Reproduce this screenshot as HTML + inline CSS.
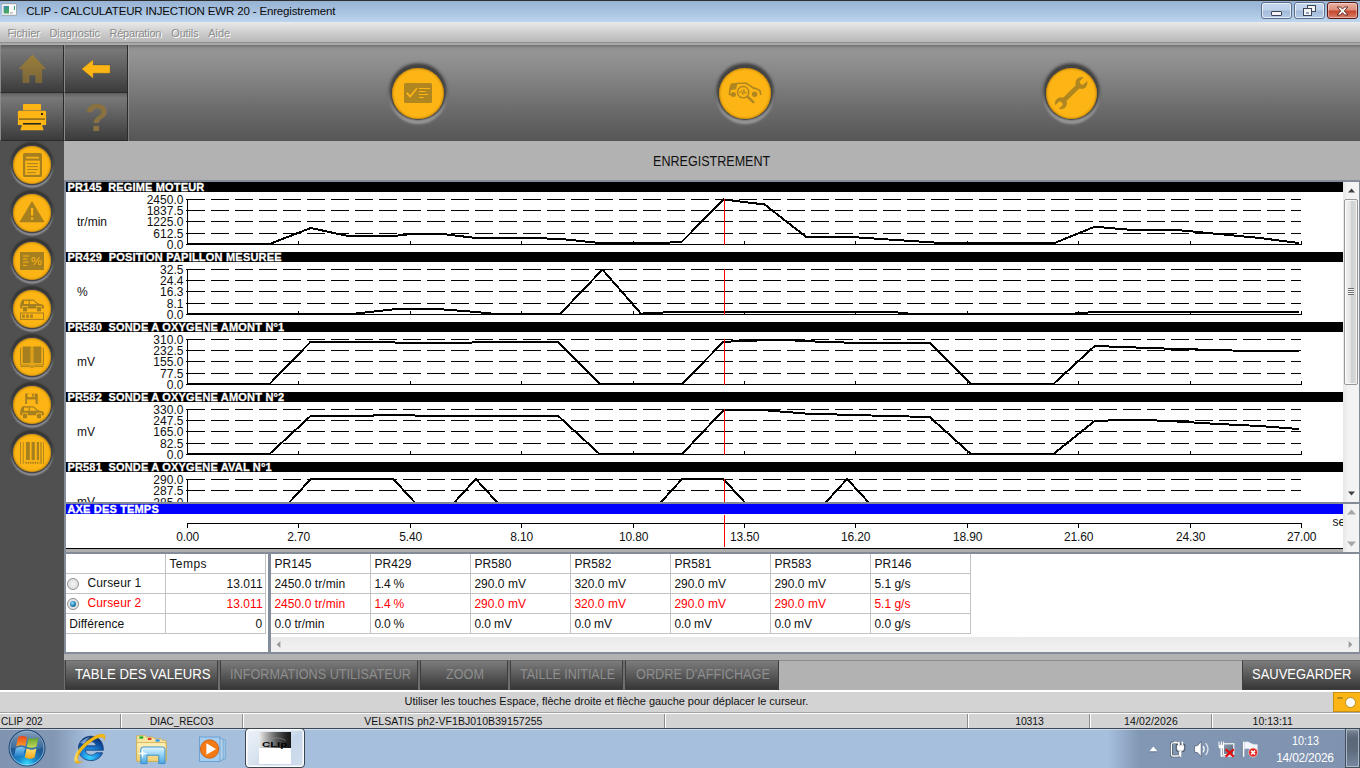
<!DOCTYPE html>
<html lang="fr"><head><meta charset="utf-8"><title>CLIP - CALCULATEUR INJECTION EWR 20 - Enregistrement</title>
<style>

html,body{margin:0;padding:0}
body{width:1360px;height:768px;overflow:hidden;position:relative;background:#b2b2b2;font-family:"Liberation Sans",sans-serif;}
.abs{position:absolute;display:block}
.t{position:absolute;white-space:pre;display:block}
#header{position:absolute;left:64px;top:141px;width:1296px;height:39px;background:#b2b2b2}


#titlebar{position:absolute;left:0;top:0;width:1360px;height:22px;box-sizing:border-box;border-top:1px solid #2e2e2e;background:linear-gradient(#97b3d4 0%,#a6c0de 45%,#bdd5ee 100%);}
.wbtn{position:absolute;top:1px;width:31px;height:17px;box-sizing:border-box;border:1px solid #5c6f8d;border-radius:3px;background:linear-gradient(#c4d6ec 0%,#bdd1e9 48%,#a2bbd9 52%,#b4cbe6 100%);box-shadow:inset 0 0 0 1px rgba(255,255,255,.65);}
.wbtn i{position:absolute;display:block;box-sizing:border-box}
.wclose{border-color:#5a1a14;background:linear-gradient(#e8b0a4 0%,#dc8d7c 48%,#c5432a 52%,#d8806c 100%);box-shadow:inset 0 0 0 1px rgba(255,255,255,.4);}
#menubar{position:absolute;left:0;top:22px;width:1360px;height:20px;background:linear-gradient(#eaeaea 0%,#dcdcdc 25%,#c9c9c9 62%,#b9b9b9 100%);}
#toolbar{position:absolute;left:0;top:45px;width:1360px;height:96px;background:linear-gradient(#6c6c6c 0,#7c7c7c 1px,#888 2px,#929292 4px,#959595 7px,#8a8a8a 24px,#6b6b6b 65px,#565656 96px);}
.sq{position:absolute;width:64px;height:48px;box-sizing:border-box;border-left:1px solid #8a8a8a;border-right:1px solid #2a2a2a;border-bottom:1px solid #2a2a2a;background:linear-gradient(#5c5c5c 0,#6b6b6b 2px,#787878 5px,#5e5e5e 50%,#3b3b3b 100%);overflow:hidden}
.rb{position:absolute;width:51.4px;height:51.4px;border-radius:50%;background:#fdb515;box-shadow:0 -0.5px 1px 1.4px rgba(70,70,70,.9),0 -2.2px 3px 2.6px rgba(45,45,45,.8),0 2.6px 2.4px 2.4px rgba(165,165,165,.85),inset 0 0 2px 1px rgba(150,95,0,.55);}


#sidebar{position:absolute;left:0;top:141px;width:64px;height:549px;background:#505050;}
.sb{position:absolute;left:13px;width:38px;height:38px;border-radius:50%;background:#fdb515;box-shadow:0 0 0.5px 1.2px #474747,0 -1.6px 2px 2.4px rgba(48,48,48,.9),0 1.5px 1.3px 2.2px rgba(146,150,154,.95),inset 0 0 2px 1px rgba(150,95,0,.5);}


#chartpanel{position:absolute;left:66px;top:182px;width:1277px;height:320px;background:#fff;overflow:hidden}
#timepanel{position:absolute;left:66px;top:504px;width:1277px;height:48px;background:#fff;overflow:hidden}
.vsb{position:absolute;width:16px;background:linear-gradient(90deg,#e6e6e6 0%,#f2f2f2 30%,#f4f4f4 100%);}
.thumb{position:absolute;left:1px;width:14px;box-sizing:border-box;border:1px solid #989898;border-radius:2px;background:linear-gradient(90deg,#f4f4f4 0%,#e4e4e6 45%,#cfd0d2 55%,#dcdcdc 100%);box-shadow:inset 0 0 0 1px rgba(255,255,255,.7)}
.thumb i{position:absolute;left:3px;top:50%;margin-top:-4px;width:6px;height:7px;background:repeating-linear-gradient(#6e6e6e 0,#6e6e6e 1px,rgba(255,255,255,.8) 1px,rgba(255,255,255,.8) 2px)}


#frame{position:absolute;left:64px;top:180px;width:1296px;height:474px;background:#858c99;}
#ltable{position:absolute;left:66px;top:554px;width:202px;height:98px;background:#fff;overflow:hidden}
#rtable{position:absolute;left:271px;top:554px;width:1088px;height:98px;background:#fff;overflow:hidden}
.gl{position:absolute;background:#c3c3c3}
.radio{position:absolute;width:12px;height:12px;box-sizing:border-box;border-radius:50%;border:1px solid #8e8f8f;background:radial-gradient(circle at 50% 50%,#f4f4f4 0%,#e3e5e8 45%,#c9ccd1 100%);box-shadow:inset 0 0 0 1px #e8e8e8}
.radio.on i{position:absolute;left:2px;top:2px;width:6px;height:6px;border-radius:50%;background:radial-gradient(circle at 40% 35%,#9fe0f5 0%,#2a8fc4 45%,#0f3f6e 100%)}
.hsb{position:absolute;left:0;top:83px;width:1088px;height:15px;background:linear-gradient(#e9e9e9 0%,#eeeeee 40%,#f1f1f1 100%);}
#btnbar{position:absolute;left:64px;top:660px;width:1296px;height:30px}
#btnbg{position:absolute;left:0;top:0;width:715px;height:30px;background:#6e6e6e}
.btn{position:absolute;top:0;height:30px;box-sizing:border-box;border:1px solid #3e3e3e;border-top-color:#6a6a6a;background:linear-gradient(#7c7c7c 0%,#6b6b6b 25%,#4b4b4b 70%,#363636 100%);}
#status1{position:absolute;left:0;top:690px;width:1360px;height:22px;background:#d3d3d3;border-top:2px solid #fff;box-sizing:border-box}
.cam{position:absolute;left:1333px;top:0px;width:27px;height:20px;box-sizing:border-box;background:#fdb515;border:1px solid #c8900e;border-right:0}
.cam .lens{position:absolute;left:11px;top:4px;width:11px;height:11px;box-sizing:border-box;border-radius:50%;background:#fff;border:1px solid #b58a1c}
.cam .fl{position:absolute;left:3px;top:4px;width:6px;height:2px;background:#b58a1c;border-radius:1px}
#status2{position:absolute;left:0;top:712px;width:1360px;height:16px;background:#d3d3d3;box-sizing:border-box;border-top:1px solid #a2a2a2;box-shadow:inset 0 1px 0 #fff}


#taskbar{position:absolute;left:0;top:728px;width:1360px;height:40px;box-sizing:border-box;border-top:1px solid #3d4754;background:linear-gradient(90deg,#8094b1 0px,#8297b4 54px,#a6bfdd 88px,#a6bfdd 1108px,#8197b4 1140px,#7f93b0 1360px);box-shadow:inset 0 1px 0 rgba(215,230,246,.75)}
.tbtn{position:absolute;left:245px;top:-1px;width:60px;height:40px;box-sizing:border-box;border:1px solid #3c4652;border-radius:4px;background:linear-gradient(135deg,#eef3f9 0%,#d5e1ef 45%,#c6d6ea 60%,#d2deed 100%);box-shadow:inset 0 0 0 1.5px rgba(255,255,255,.95)}
.clipicon{position:absolute;left:13px;top:3px;width:32px;height:32px;background:#fff}
.clipicon .ct{position:absolute;left:0;top:0;width:32px;height:16px;overflow:hidden;background:linear-gradient(90deg,#ececec 0%,#a0a0a0 28%,#5a5a5a 55%,#242424 85%,#161616 100%)}
#showdesk{position:absolute;left:1345px;top:0;width:15px;height:39px;box-sizing:border-box;border:1px solid #44505e;border-top:0;background:linear-gradient(180deg,#8a94a4 0%,#6a7687 12%,#5a6778 24%,#5d6b7c 55%,#7888a0 100%);box-shadow:inset 0 0 0 1px rgba(185,197,212,.8)}

</style></head>
<body>
<div id="titlebar">
<svg class="abs" style="left:0;top:0" width="20" height="20" viewBox="0 1 20 20"><defs><linearGradient id="ai" x1="0" y1="0" x2="0.3" y2="1"><stop offset="0" stop-color="#3f7fc0"/><stop offset="0.35" stop-color="#3f958f"/><stop offset="1" stop-color="#4aa85a"/></linearGradient></defs><rect x="2.2" y="3.4" width="14.4" height="12.2" fill="#9a9a9a"/><rect x="2.2" y="4.2" width="13.8" height="10.6" fill="#fcfcfc"/><rect x="3.6" y="5.9" width="5.4" height="7.6" fill="url(#ai)"/><rect x="10" y="12" width="2.9" height="1.6" fill="#c2c2c2"/><rect x="13.9" y="5.9" width="1.1" height="4.1" fill="url(#ai)"/></svg>
<span class="t" style="left:26.20px;top:4px;font-size:11.5px;line-height:12px;color:#0a0a0a;letter-spacing:-0.157px;">CLIP - CALCULATEUR INJECTION EWR 20 - Enregistrement</span>
<div class="wbtn" style="left:1261px"><i style="left:9px;top:8px;width:9px;height:3px;background:#f4f4f4;border:1px solid #3c4558;border-radius:1px;box-sizing:content-box"></i></div>
<div class="wbtn" style="left:1294px"><i style="left:12px;top:2px;width:7px;height:5px;background:#f4f4f4;border:1px solid #3c4558;box-sizing:content-box"></i><i style="left:8px;top:5px;width:7px;height:6px;background:#f4f4f4;border:1px solid #3c4558;box-sizing:content-box"></i><i style="left:11px;top:9px;width:3px;height:2px;background:#8fa6c4"></i></div>
<div class="wbtn wclose" style="left:1327px"><svg class="abs" style="left:8px;top:3px" width="13" height="10" viewBox="0 0 13 10"><path d="M1.2 1 L4.6 1 L6.5 3.1 L8.4 1 L11.8 1 L8.3 4.9 L12 9 L8.5 9 L6.5 6.7 L4.5 9 L1 9 L4.7 4.9 Z" fill="#f6f6f6" stroke="#5a2018" stroke-width="0.9"/></svg></div>
</div>
<div id="menubar">
<span class="t" style="left:7.50px;top:5px;font-size:11px;line-height:12px;color:#8c8c8c;letter-spacing:-0.100px;text-shadow:1px 1px 0 #fff;">Fichier</span>
<span class="t" style="left:49.40px;top:5px;font-size:11px;line-height:12px;color:#8c8c8c;letter-spacing:-0.076px;text-shadow:1px 1px 0 #fff;">Diagnostic</span>
<span class="t" style="left:109.40px;top:5px;font-size:11px;line-height:12px;color:#8c8c8c;letter-spacing:-0.191px;text-shadow:1px 1px 0 #fff;">Réparation</span>
<span class="t" style="left:171.30px;top:5px;font-size:11px;line-height:12px;color:#8c8c8c;letter-spacing:-0.186px;text-shadow:1px 1px 0 #fff;">Outils</span>
<span class="t" style="left:208.30px;top:5px;font-size:11px;line-height:12px;color:#8c8c8c;letter-spacing:-0.054px;text-shadow:1px 1px 0 #fff;">Aide</span>
</div>
<div class="abs" style="left:0;top:42px;width:1360px;height:1px;background:#8f8f8f"></div>
<div class="abs" style="left:0;top:43px;width:1360px;height:2px;background:linear-gradient(#a4a4a4,#b0b0b0)"></div>
<div id="toolbar">
<div class="abs" style="left:128px;top:0;width:1px;height:96px;background:rgba(190,190,190,.35)"></div>
<div class="sq" style="left:0;top:0"><svg class="abs" style="left:0;top:0" width="62" height="47" viewBox="1 45 62 47"><defs><linearGradient id="hg" x1="0" y1="0" x2="0" y2="1"><stop offset="0" stop-color="#9b7e3a"/><stop offset="1" stop-color="#7b6638"/></linearGradient></defs><path d="M32.4 54.6 L46.2 69 L42.1 69 L42.1 83 L35.4 83 L35.4 75.3 L29.4 75.3 L29.4 83 L22.6 83 L22.6 69 L18.6 69 Z" fill="url(#hg)"/></svg></div>
<div class="sq" style="left:64px;top:0"><svg class="abs" style="left:0;top:0" width="63" height="47" viewBox="65 45 63 47"><path d="M81.6 69 L93.2 59.6 L93.2 64.9 L110.1 64.9 L110.1 73.2 L93.2 73.2 L93.2 78.4 Z" fill="#fdb515" stroke="#3a3a3a" stroke-opacity=".35" stroke-width="0.8"/></svg></div>
<div class="sq" style="left:0;top:48px"><svg class="abs" style="left:0;top:0" width="62" height="48" viewBox="1 93 62 48"><g fill="#fdb515"><rect x="23" y="104" width="18" height="6.2" rx="0.8"/><path d="M19.3 110.8 L44.7 110.8 Q46.1 110.8 46.1 112.2 L46.1 125 L17.9 125 L17.9 112.2 Q17.9 110.8 19.3 110.8 Z"/><path d="M22.6 122.8 L41.4 122.8 L43.6 130.3 L20.4 130.3 Z"/></g><rect x="19" y="118.6" width="26" height="0.9" fill="#3a3320"/><rect x="23" y="123" width="18" height="1.6" fill="#2c2818"/><rect x="41" y="113" width="2" height="2" fill="#2c2818"/></svg></div>
<div class="sq" style="left:64px;top:48px"><span class="t" style="left:19.89px;top:3px;font-size:39px;line-height:43px;color:#8a7240;font-weight:bold;">?</span></div>
<div class="rb" style="left:392.4px;top:22.5px"></div>
<svg class="abs" style="left:392px;top:22px" width="52" height="52" viewBox="392 67 52 52"><rect x="404" y="83" width="28" height="20" rx="1.5" fill="#b08620"/><path d="M406 93.6 L407.8 92.2 L410 95.2 L416.6 87.6 L417.6 88.4 L410.2 98 Z" fill="#fdb515"/><g stroke="#fdb515" stroke-width="1.1"><path d="M419 88.5 H430 M419 91.5 H425.6 M419 94.5 H428 M419 97.5 H423.8"/></g></svg>
<div class="rb" style="left:719.3px;top:22.6px"></div>
<svg class="abs" style="left:719px;top:22px" width="52" height="52" viewBox="719 67 52 52"><g fill="none" stroke="#b08620" stroke-width="1.7" stroke-linecap="round" stroke-linejoin="round"><path d="M731.6 84.4 Q738.4 82.8 746.4 83.4 Q750.6 86 753.8 88.2 Q759.4 89.4 760.4 91.8 L760.6 94.2"/><path d="M731.4 84.6 Q729.8 88 729.8 91.6 L729.4 94.4 L731 94.8"/></g><path d="M731 84.6 Q734.6 83.6 737.4 83.6 L736 89.2 L730 90.2 Q730 87 731 84.6 Z" fill="#b08620"/><circle cx="733.4" cy="94.6" r="2.5" fill="#b08620"/><circle cx="754.6" cy="94.2" r="2.7" fill="#b08620"/><circle cx="743.2" cy="92.2" r="5.7" fill="#fdb515" stroke="#b08620" stroke-width="1.4"/><path d="M738.8 92.4 H740.6 L741.6 90.6 L742.8 94.8 L743.9 89.4 L744.9 93.8 L745.8 92.4 H747.6" fill="none" stroke="#b08620" stroke-width="0.9"/><path d="M747.4 96.6 L753.4 102.2" stroke="#b08620" stroke-width="2.4" stroke-linecap="round"/></svg>
<div class="rb" style="left:1045.6px;top:22.6px"></div>
<svg class="abs" style="left:1045px;top:22px" width="52" height="52" viewBox="1045 67 52 52"><g transform="rotate(-44.5 1071.2 93.1)"><rect x="1059" y="90.7" width="24.4" height="4.8" fill="#b08620"/><circle cx="1085.6" cy="93.1" r="6" fill="#b08620"/><path d="M1085.2 90.6 H1093 V95.6 H1085.2 Q1083.6 93.1 1085.2 90.6 Z" fill="#fdb515"/><circle cx="1056.8" cy="93.1" r="6" fill="#b08620"/><path d="M1057.2 90.6 H1049.4 V95.6 H1057.2 Q1058.8 93.1 1057.2 90.6 Z" fill="#fdb515"/></g></svg>
</div>
<div id="sidebar">
<div class="sb" style="top:5px"></div>
<div class="sb" style="top:53px"></div>
<div class="sb" style="top:101px"></div>
<div class="sb" style="top:149px"></div>
<div class="sb" style="top:197px"></div>
<div class="sb" style="top:245px"></div>
<div class="sb" style="top:293px"></div>
<svg class="abs" style="left:0;top:0" width="64" height="549" viewBox="0 141 64 549"><rect x="23" y="153" width="19" height="24" rx="1.6" fill="#a67f1e"/><rect x="25.2" y="160.6" width="14.6" height="14.2" fill="#fdb515"/><rect x="26" y="156.8" width="13" height="1.7" fill="#fdb515"/><path d="M27 163.6 H38 M27 166.6 H38 M27 169.6 H38 M27 172.6 H36" stroke="#a67f1e" stroke-width="1"/><path d="M32 201.6 L44.2 222 L19.8 222 Z" fill="#a67f1e" stroke="#a67f1e" stroke-width="0.6" stroke-linejoin="round"/><rect x="31" y="208" width="2.2" height="7.6" fill="#fdb515"/><rect x="31" y="217.4" width="2.2" height="2.3" fill="#fdb515"/><rect x="20" y="252" width="24" height="18" fill="#a67f1e"/><path d="M23 256 H29 M23 259 H27.4 M23 262 H28.6 M23 265.4 H26.6" stroke="#fdb515" stroke-width="1"/><text x="36.6" y="265" font-size="11" text-anchor="middle" fill="#fdb515" font-family="Liberation Sans, sans-serif" textLength="11" lengthAdjust="spacingAndGlyphs">%</text><path d="M22.6 299.4 L33.6 299.4 L38.2 303.4 L43.2 304.8 L44.0 306.4 L44.0 308.4 L20.2 308.4 L20.2 304.2 L21.2 301.4 Z" fill="#a67f1e"/><rect x="23.0" y="306.8" width="4" height="4.6" fill="#a67f1e"/><rect x="37.0" y="306.8" width="4" height="4.6" fill="#a67f1e"/><path d="M22.4 306.5 h5.2 M36.4 306.5 h5.2" stroke="#fdb515" stroke-width="0.9"/><path d="M22.6 306.5 v2 M27.4 306.5 v2 M36.6 306.5 v2 M41.4 306.5 v2" stroke="#fdb515" stroke-width="0.8"/><rect x="24.0" y="300.8" width="4.6" height="3.2" fill="#fdb515"/><path d="M29.8 300.8 h3.6 l3.4 3.2 h-7 Z" fill="#fdb515"/><rect x="20.5" y="313" width="23" height="6.4" fill="none" stroke="#a67f1e" stroke-width="1"/><rect x="22.2" y="314.6" width="2.6" height="3.2" fill="#a67f1e"/><rect x="26.2" y="314.6" width="2.6" height="3.2" fill="#a67f1e"/><rect x="30.2" y="314.6" width="2.6" height="3.2" fill="#a67f1e"/><path d="M22.6 346.4 L30.6 346.4 L30.6 363.2 L22.6 363.2 Z M33.4 346.4 L41.4 346.4 L41.4 363.2 L33.4 363.2 Z" fill="#a67f1e"/><path d="M20.6 347.6 V365 H29.6 Q31 365 32 366.4 Q33 365 34.4 365 H43.4 V347.6" fill="none" stroke="#a67f1e" stroke-width="1"/><path d="M20.4 366.6 H29 Q31 366.6 32 368 Q33 366.6 35 366.6 H43.6" fill="none" stroke="#a67f1e" stroke-width="0.9"/><path d="M32 346.4 V364" stroke="#a67f1e" stroke-width="0.8"/><path d="M25.2 393.4 H36.6 L37.8 394.6 V404 H25.2 Z" fill="#a67f1e"/><rect x="27.6" y="393.4" width="7" height="3.8" fill="#fdb515"/><rect x="32" y="393.8" width="1.6" height="2.8" fill="#a67f1e"/><rect x="27" y="399.4" width="8.6" height="4.6" fill="#fdb515"/><path d="M22.6 406.2 L33.6 406.2 L38.2 410.2 L43.2 411.6 L44.0 413.2 L44.0 415.2 L20.2 415.2 L20.2 411.0 L21.2 408.2 Z" fill="#a67f1e"/><rect x="23.0" y="413.6" width="4" height="4.6" fill="#a67f1e"/><rect x="37.0" y="413.6" width="4" height="4.6" fill="#a67f1e"/><path d="M22.4 413.3 h5.2 M36.4 413.3 h5.2" stroke="#fdb515" stroke-width="0.9"/><path d="M22.6 413.3 v2 M27.4 413.3 v2 M36.6 413.3 v2 M41.4 413.3 v2" stroke="#fdb515" stroke-width="0.8"/><rect x="24.0" y="407.6" width="4.6" height="3.2" fill="#fdb515"/><path d="M29.8 407.6 h3.6 l3.4 3.2 h-7 Z" fill="#fdb515"/><rect x="20.2" y="442" width="0.8" height="22.0" fill="#a67f1e"/><rect x="22.8" y="442" width="0.8" height="22.0" fill="#a67f1e"/><rect x="26.0" y="442" width="3.8" height="18.0" fill="#a67f1e"/><rect x="31.6" y="442" width="3.2" height="18.0" fill="#a67f1e"/><rect x="36.8" y="442" width="2.2" height="18.0" fill="#a67f1e"/><rect x="40.4" y="442" width="1.2" height="22.0" fill="#a67f1e"/><rect x="43.0" y="442" width="0.8" height="22.0" fill="#a67f1e"/><path d="M25.4 462.8 H39.6" stroke="#a67f1e" stroke-width="2" stroke-dasharray="1.4 0.9"/></svg>
</div>
<div id="header"><span class="t" style="left:589.40px;top:12px;font-size:14px;line-height:16px;color:#111;transform:scaleX(0.8969);transform-origin:0 0;">ENREGISTREMENT</span></div>
<div id="frame"></div>
<div id="chartpanel">
<svg class="abs" style="left:0;top:0" width="1277" height="320" viewBox="66 182 1277 320" shape-rendering="crispEdges"><rect x="66" y="182" width="1277" height="10" fill="#000"/><path d="M187 199.5 H1301" stroke="#000" stroke-width="1" stroke-dasharray="18 6"/><rect x="186" y="199" width="1" height="1" fill="#000"/><path d="M187 210.5 H1301" stroke="#000" stroke-width="1" stroke-dasharray="18 6"/><rect x="186" y="210" width="1" height="1" fill="#000"/><path d="M187 221.5 H1301" stroke="#000" stroke-width="1" stroke-dasharray="18 6"/><rect x="186" y="221" width="1" height="1" fill="#000"/><path d="M187 233.5 H1301" stroke="#000" stroke-width="1" stroke-dasharray="18 6"/><rect x="186" y="233" width="1" height="1" fill="#000"/><rect x="187" y="199" width="1" height="46" fill="#000"/><rect x="186" y="244" width="1116" height="1" fill="#000"/><rect x="298" y="241" width="1" height="4" fill="#000"/><rect x="410" y="241" width="1" height="4" fill="#000"/><rect x="521" y="241" width="1" height="4" fill="#000"/><rect x="633" y="241" width="1" height="4" fill="#000"/><rect x="744" y="241" width="1" height="4" fill="#000"/><rect x="855" y="241" width="1" height="4" fill="#000"/><rect x="967" y="241" width="1" height="4" fill="#000"/><rect x="1078" y="241" width="1" height="4" fill="#000"/><rect x="1190" y="241" width="1" height="4" fill="#000"/><rect x="1301" y="241" width="1" height="4" fill="#000"/><polyline points="187.0,244.0 269.5,244.0 310.8,228.0 347.9,236.0 393.3,236.0 411.9,234.0 442.8,234.0 475.8,238.0 517.1,238.0 558.3,238.7 599.6,243.0 657.4,243.5 682.1,241.5 723.4,199.5 764.6,204.5 805.9,236.7 847.1,236.7 888.4,239.5 929.7,242.2 946.2,243.4 1053.4,243.5 1094.7,226.7 1127.7,229.6 1177.2,230.0 1218.5,234.0 1259.7,238.0 1298.9,243.0" fill="none" stroke="#000" stroke-width="2" stroke-linejoin="round"/><rect x="724" y="199" width="1" height="46" fill="#f00"/><rect x="66" y="252" width="1277" height="10" fill="#000"/><path d="M187 269.5 H1301" stroke="#000" stroke-width="1" stroke-dasharray="18 6"/><rect x="186" y="269" width="1" height="1" fill="#000"/><path d="M187 280.5 H1301" stroke="#000" stroke-width="1" stroke-dasharray="18 6"/><rect x="186" y="280" width="1" height="1" fill="#000"/><path d="M187 291.5 H1301" stroke="#000" stroke-width="1" stroke-dasharray="18 6"/><rect x="186" y="291" width="1" height="1" fill="#000"/><path d="M187 303.5 H1301" stroke="#000" stroke-width="1" stroke-dasharray="18 6"/><rect x="186" y="303" width="1" height="1" fill="#000"/><rect x="187" y="269" width="1" height="46" fill="#000"/><rect x="186" y="314" width="1116" height="1" fill="#000"/><rect x="298" y="311" width="1" height="4" fill="#000"/><rect x="410" y="311" width="1" height="4" fill="#000"/><rect x="521" y="311" width="1" height="4" fill="#000"/><rect x="633" y="311" width="1" height="4" fill="#000"/><rect x="744" y="311" width="1" height="4" fill="#000"/><rect x="855" y="311" width="1" height="4" fill="#000"/><rect x="967" y="311" width="1" height="4" fill="#000"/><rect x="1078" y="311" width="1" height="4" fill="#000"/><rect x="1190" y="311" width="1" height="4" fill="#000"/><rect x="1301" y="311" width="1" height="4" fill="#000"/><polyline points="187.0,314.0 352.0,314.0 393.3,309.4 442.8,309.4 475.8,312.0 496.4,314.0 560.0,314.0 602.5,269.6 640.9,313.6 682.1,311.6 888.4,311.6 909.0,313.6 1074.1,313.6 1094.7,312.0 1298.9,312.0" fill="none" stroke="#000" stroke-width="2" stroke-linejoin="round"/><rect x="724" y="269" width="1" height="46" fill="#f00"/><rect x="66" y="322" width="1277" height="10" fill="#000"/><path d="M187 339.5 H1301" stroke="#000" stroke-width="1" stroke-dasharray="18 6"/><rect x="186" y="339" width="1" height="1" fill="#000"/><path d="M187 350.5 H1301" stroke="#000" stroke-width="1" stroke-dasharray="18 6"/><rect x="186" y="350" width="1" height="1" fill="#000"/><path d="M187 361.5 H1301" stroke="#000" stroke-width="1" stroke-dasharray="18 6"/><rect x="186" y="361" width="1" height="1" fill="#000"/><path d="M187 373.5 H1301" stroke="#000" stroke-width="1" stroke-dasharray="18 6"/><rect x="186" y="373" width="1" height="1" fill="#000"/><rect x="187" y="339" width="1" height="46" fill="#000"/><rect x="186" y="384" width="1116" height="1" fill="#000"/><rect x="298" y="381" width="1" height="4" fill="#000"/><rect x="410" y="381" width="1" height="4" fill="#000"/><rect x="521" y="381" width="1" height="4" fill="#000"/><rect x="633" y="381" width="1" height="4" fill="#000"/><rect x="744" y="381" width="1" height="4" fill="#000"/><rect x="855" y="381" width="1" height="4" fill="#000"/><rect x="967" y="381" width="1" height="4" fill="#000"/><rect x="1078" y="381" width="1" height="4" fill="#000"/><rect x="1190" y="381" width="1" height="4" fill="#000"/><rect x="1301" y="381" width="1" height="4" fill="#000"/><polyline points="187.0,384.0 269.5,384.0 310.8,341.6 393.3,341.6 395.4,342.6 558.3,342.4 599.6,384.0 682.1,384.0 723.4,341.8 764.6,340.2 793.5,340.4 805.9,341.2 847.1,342.6 929.7,342.6 970.9,384.0 1053.4,384.0 1094.7,346.0 1136.0,347.5 1177.2,349.0 1218.5,350.0 1259.7,351.5 1298.9,351.3" fill="none" stroke="#000" stroke-width="2" stroke-linejoin="round"/><rect x="724" y="339" width="1" height="46" fill="#f00"/><rect x="66" y="392" width="1277" height="10" fill="#000"/><path d="M187 409.5 H1301" stroke="#000" stroke-width="1" stroke-dasharray="18 6"/><rect x="186" y="409" width="1" height="1" fill="#000"/><path d="M187 420.5 H1301" stroke="#000" stroke-width="1" stroke-dasharray="18 6"/><rect x="186" y="420" width="1" height="1" fill="#000"/><path d="M187 431.5 H1301" stroke="#000" stroke-width="1" stroke-dasharray="18 6"/><rect x="186" y="431" width="1" height="1" fill="#000"/><path d="M187 443.5 H1301" stroke="#000" stroke-width="1" stroke-dasharray="18 6"/><rect x="186" y="443" width="1" height="1" fill="#000"/><rect x="187" y="409" width="1" height="46" fill="#000"/><rect x="186" y="454" width="1116" height="1" fill="#000"/><rect x="298" y="451" width="1" height="4" fill="#000"/><rect x="410" y="451" width="1" height="4" fill="#000"/><rect x="521" y="451" width="1" height="4" fill="#000"/><rect x="633" y="451" width="1" height="4" fill="#000"/><rect x="744" y="451" width="1" height="4" fill="#000"/><rect x="855" y="451" width="1" height="4" fill="#000"/><rect x="967" y="451" width="1" height="4" fill="#000"/><rect x="1078" y="451" width="1" height="4" fill="#000"/><rect x="1190" y="451" width="1" height="4" fill="#000"/><rect x="1301" y="451" width="1" height="4" fill="#000"/><polyline points="187.0,454.0 269.5,454.0 310.8,415.8 372.7,415.8 374.7,415.0 413.9,415.0 416.0,416.0 558.3,416.0 599.6,454.0 682.1,454.0 723.4,410.2 764.6,410.2 805.9,413.6 847.1,414.8 888.4,416.0 929.7,417.0 970.9,454.0 1053.4,454.0 1094.7,421.0 1136.0,419.5 1177.2,421.5 1218.5,424.0 1259.7,426.0 1298.9,429.0" fill="none" stroke="#000" stroke-width="2" stroke-linejoin="round"/><rect x="724" y="409" width="1" height="46" fill="#f00"/><rect x="66" y="462" width="1277" height="10" fill="#000"/><path d="M187 479.5 H1301" stroke="#000" stroke-width="1" stroke-dasharray="18 6"/><rect x="186" y="479" width="1" height="1" fill="#000"/><path d="M187 490.5 H1301" stroke="#000" stroke-width="1" stroke-dasharray="18 6"/><rect x="186" y="490" width="1" height="1" fill="#000"/><path d="M187 502.5 H1301" stroke="#000" stroke-width="1" stroke-dasharray="18 6"/><rect x="186" y="502" width="1" height="1" fill="#000"/><path d="M187 513.5 H1301" stroke="#000" stroke-width="1" stroke-dasharray="18 6"/><rect x="186" y="513" width="1" height="1" fill="#000"/><rect x="187" y="479" width="1" height="46" fill="#000"/><rect x="186" y="524" width="1116" height="1" fill="#000"/><rect x="298" y="521" width="1" height="4" fill="#000"/><rect x="410" y="521" width="1" height="4" fill="#000"/><rect x="521" y="521" width="1" height="4" fill="#000"/><rect x="633" y="521" width="1" height="4" fill="#000"/><rect x="744" y="521" width="1" height="4" fill="#000"/><rect x="855" y="521" width="1" height="4" fill="#000"/><rect x="967" y="521" width="1" height="4" fill="#000"/><rect x="1078" y="521" width="1" height="4" fill="#000"/><rect x="1190" y="521" width="1" height="4" fill="#000"/><rect x="1301" y="521" width="1" height="4" fill="#000"/><polyline points="187.0,524.0 269.5,524.0 310.8,479.0 393.3,479.0 434.6,524.0 475.8,479.0 517.1,524.0 640.9,524.0 682.1,479.0 723.4,479.0 764.6,524.0 805.9,524.0 847.1,479.0 888.4,524.0 1298.9,524.0" fill="none" stroke="#000" stroke-width="2" stroke-linejoin="round"/><rect x="724" y="479" width="1" height="46" fill="#f00"/></svg>
<span class="t" style="left:1.40px;top:-1px;font-size:11px;line-height:12px;color:#fff;letter-spacing:0.157px;font-weight:bold;white-space:pre;-webkit-text-stroke:0.3px #fff;">PR145  REGIME MOTEUR</span>
<span class="t" style="left:80.70px;top:11px;font-size:12px;line-height:14px;color:#111;">2450.0</span>
<span class="t" style="left:80.70px;top:22px;font-size:12px;line-height:14px;color:#111;">1837.5</span>
<span class="t" style="left:80.70px;top:33px;font-size:12px;line-height:14px;color:#111;">1225.0</span>
<span class="t" style="left:87.37px;top:45px;font-size:12px;line-height:14px;color:#111;">612.5</span>
<span class="t" style="left:100.72px;top:56px;font-size:12px;line-height:14px;color:#111;">0.0</span>
<span class="t" style="left:11.00px;top:33px;font-size:12px;line-height:14px;color:#111;">tr/min</span>
<span class="t" style="left:1.40px;top:69px;font-size:11px;line-height:12px;color:#fff;letter-spacing:0.215px;font-weight:bold;white-space:pre;-webkit-text-stroke:0.3px #fff;">PR429  POSITION PAPILLON MESUREE</span>
<span class="t" style="left:94.05px;top:81px;font-size:12px;line-height:14px;color:#111;">32.5</span>
<span class="t" style="left:94.05px;top:92px;font-size:12px;line-height:14px;color:#111;">24.4</span>
<span class="t" style="left:94.05px;top:103px;font-size:12px;line-height:14px;color:#111;">16.3</span>
<span class="t" style="left:100.72px;top:115px;font-size:12px;line-height:14px;color:#111;">8.1</span>
<span class="t" style="left:100.72px;top:126px;font-size:12px;line-height:14px;color:#111;">0.0</span>
<span class="t" style="left:11.00px;top:103px;font-size:12px;line-height:14px;color:#111;">%</span>
<span class="t" style="left:1.40px;top:139px;font-size:11px;line-height:12px;color:#fff;letter-spacing:0.188px;font-weight:bold;white-space:pre;-webkit-text-stroke:0.3px #fff;">PR580  SONDE A OXYGENE AMONT N°1</span>
<span class="t" style="left:87.37px;top:151px;font-size:12px;line-height:14px;color:#111;">310.0</span>
<span class="t" style="left:87.37px;top:162px;font-size:12px;line-height:14px;color:#111;">232.5</span>
<span class="t" style="left:87.37px;top:173px;font-size:12px;line-height:14px;color:#111;">155.0</span>
<span class="t" style="left:94.05px;top:185px;font-size:12px;line-height:14px;color:#111;">77.5</span>
<span class="t" style="left:100.72px;top:196px;font-size:12px;line-height:14px;color:#111;">0.0</span>
<span class="t" style="left:11.00px;top:173px;font-size:12px;line-height:14px;color:#111;">mV</span>
<span class="t" style="left:1.40px;top:209px;font-size:11px;line-height:12px;color:#fff;letter-spacing:0.188px;font-weight:bold;white-space:pre;-webkit-text-stroke:0.3px #fff;">PR582  SONDE A OXYGENE AMONT N°2</span>
<span class="t" style="left:87.37px;top:221px;font-size:12px;line-height:14px;color:#111;">330.0</span>
<span class="t" style="left:87.37px;top:232px;font-size:12px;line-height:14px;color:#111;">247.5</span>
<span class="t" style="left:87.37px;top:243px;font-size:12px;line-height:14px;color:#111;">165.0</span>
<span class="t" style="left:94.05px;top:255px;font-size:12px;line-height:14px;color:#111;">82.5</span>
<span class="t" style="left:100.72px;top:266px;font-size:12px;line-height:14px;color:#111;">0.0</span>
<span class="t" style="left:11.00px;top:243px;font-size:12px;line-height:14px;color:#111;">mV</span>
<span class="t" style="left:1.40px;top:279px;font-size:11px;line-height:12px;color:#fff;letter-spacing:0.184px;font-weight:bold;white-space:pre;-webkit-text-stroke:0.3px #fff;">PR581  SONDE A OXYGENE AVAL N°1</span>
<span class="t" style="left:87.37px;top:291px;font-size:12px;line-height:14px;color:#111;">290.0</span>
<span class="t" style="left:87.37px;top:302px;font-size:12px;line-height:14px;color:#111;">287.5</span>
<span class="t" style="left:87.37px;top:314px;font-size:12px;line-height:14px;color:#111;">285.0</span>
<span class="t" style="left:87.37px;top:325px;font-size:12px;line-height:14px;color:#111;">282.5</span>
<span class="t" style="left:87.37px;top:336px;font-size:12px;line-height:14px;color:#111;">280.0</span>
<span class="t" style="left:11.00px;top:313px;font-size:12px;line-height:14px;color:#111;">mV</span>
</div>
<div class="vsb" style="left:1343px;top:182px;height:320px"><svg class="abs" style="left:5px;top:5.6px" width="7" height="5" viewBox="0 0 7 5"><path d="M0 4.4 L3.5 0.4 L7 4.4 Z" fill="#404040"/></svg><div class="thumb" style="top:17px;height:186px"><i></i></div><svg class="abs" style="left:5px;top:309.4px" width="7" height="5" viewBox="0 0 7 5"><path d="M0 0.6 L3.5 4.6 L7 0.6 Z" fill="#404040"/></svg></div>
<div id="timepanel">
<svg class="abs" style="left:0;top:0" width="1277" height="48" viewBox="66 504 1277 48" shape-rendering="crispEdges"><rect x="66" y="504" width="1277" height="10" fill="#0000fe"/><rect x="187" y="523" width="1115" height="1" fill="#000"/><rect x="187" y="523" width="1" height="5" fill="#000"/><rect x="298" y="523" width="1" height="5" fill="#000"/><rect x="410" y="523" width="1" height="5" fill="#000"/><rect x="521" y="523" width="1" height="5" fill="#000"/><rect x="633" y="523" width="1" height="5" fill="#000"/><rect x="744" y="523" width="1" height="5" fill="#000"/><rect x="855" y="523" width="1" height="5" fill="#000"/><rect x="967" y="523" width="1" height="5" fill="#000"/><rect x="1078" y="523" width="1" height="5" fill="#000"/><rect x="1190" y="523" width="1" height="5" fill="#000"/><rect x="1301" y="523" width="1" height="5" fill="#000"/><rect x="724" y="515" width="1" height="32" fill="#f00"/><rect x="66" y="548" width="1277" height="1.4" fill="#000"/><rect x="66" y="549.4" width="1277" height="2.6" fill="#aeaeae"/></svg>
<span class="t" style="left:1.40px;top:-1px;font-size:11px;line-height:12px;color:#fff;letter-spacing:0.174px;font-weight:bold;-webkit-text-stroke:0.3px #fff;">AXE DES TEMPS</span>
<span class="t" style="left:110.30px;top:26px;font-size:12px;line-height:14px;color:#111;letter-spacing:-0.188px;">0.00</span>
<span class="t" style="left:221.30px;top:26px;font-size:12px;line-height:14px;color:#111;letter-spacing:-0.188px;">2.70</span>
<span class="t" style="left:333.30px;top:26px;font-size:12px;line-height:14px;color:#111;letter-spacing:-0.188px;">5.40</span>
<span class="t" style="left:444.30px;top:26px;font-size:12px;line-height:14px;color:#111;letter-spacing:-0.188px;">8.10</span>
<span class="t" style="left:553.00px;top:26px;font-size:12px;line-height:14px;color:#111;letter-spacing:-0.165px;">10.80</span>
<span class="t" style="left:664.00px;top:26px;font-size:12px;line-height:14px;color:#111;letter-spacing:-0.165px;">13.50</span>
<span class="t" style="left:775.00px;top:26px;font-size:12px;line-height:14px;color:#111;letter-spacing:-0.165px;">16.20</span>
<span class="t" style="left:887.00px;top:26px;font-size:12px;line-height:14px;color:#111;letter-spacing:-0.165px;">18.90</span>
<span class="t" style="left:998.00px;top:26px;font-size:12px;line-height:14px;color:#111;letter-spacing:-0.165px;">21.60</span>
<span class="t" style="left:1110.00px;top:26px;font-size:12px;line-height:14px;color:#111;letter-spacing:-0.165px;">24.30</span>
<span class="t" style="left:1221.00px;top:26px;font-size:12px;line-height:14px;color:#111;letter-spacing:-0.165px;">27.00</span>
<span class="t" style="left:1266.60px;top:11px;font-size:12px;line-height:14px;color:#111;">sec</span>
</div>
<div class="vsb" style="left:1343px;top:504px;height:48px"><svg class="abs" style="left:4px;top:5px" width="9" height="6" viewBox="0 0 9 6"><path d="M0 5.5 L4.5 0.5 L9 5.5 Z" fill="#a8a8a8"/></svg><svg class="abs" style="left:4px;top:37px" width="9" height="6" viewBox="0 0 9 6"><path d="M0 0.5 L4.5 5.5 L9 0.5 Z" fill="#a8a8a8"/></svg></div>
<div id="ltable">
<div class="gl" style="left:0;top:19px;width:200px;height:1px"></div>
<div class="gl" style="left:0;top:39px;width:200px;height:1px"></div>
<div class="gl" style="left:0;top:59px;width:200px;height:1px"></div>
<div class="gl" style="left:0;top:79px;width:200px;height:1px"></div>
<div class="gl" style="left:99px;top:0;width:1px;height:80px"></div>
<div class="gl" style="left:199px;top:0;width:1px;height:80px"></div>
<span class="t" style="left:103.40px;top:3px;font-size:12px;line-height:14px;color:#111;letter-spacing:0.452px;">Temps</span>
<div class="radio" style="left:1px;top:24px"></div>
<div class="radio on" style="left:1px;top:44px"><i></i></div>
<span class="t" style="left:21.40px;top:22px;font-size:12px;line-height:14px;color:#111;letter-spacing:0.146px;">Curseur 1</span>
<span class="t" style="left:21.40px;top:42px;font-size:12px;line-height:14px;color:#f00;letter-spacing:0.146px;">Curseur 2</span>
<span class="t" style="left:3.20px;top:63px;font-size:12px;line-height:14px;color:#111;letter-spacing:0.053px;">Différence</span>
<span class="t" style="left:160.60px;top:23px;font-size:12px;line-height:14px;color:#111;letter-spacing:0.032px;">13.011</span>
<span class="t" style="left:160.60px;top:43px;font-size:12px;line-height:14px;color:#f00;letter-spacing:0.032px;">13.011</span>
<span class="t" style="left:189.53px;top:63px;font-size:12px;line-height:14px;color:#111;">0</span>
</div>
<div id="rtable">
<div class="gl" style="left:0;top:19px;width:700px;height:1px"></div>
<div class="gl" style="left:0;top:39px;width:700px;height:1px"></div>
<div class="gl" style="left:0;top:59px;width:700px;height:1px"></div>
<div class="gl" style="left:0;top:79px;width:700px;height:1px"></div>
<div class="gl" style="left:99px;top:0;width:1px;height:80px"></div>
<div class="gl" style="left:199px;top:0;width:1px;height:80px"></div>
<div class="gl" style="left:299px;top:0;width:1px;height:80px"></div>
<div class="gl" style="left:399px;top:0;width:1px;height:80px"></div>
<div class="gl" style="left:499px;top:0;width:1px;height:80px"></div>
<div class="gl" style="left:599px;top:0;width:1px;height:80px"></div>
<div class="gl" style="left:699px;top:0;width:1px;height:80px"></div>
<span class="t" style="left:3.40px;top:3px;font-size:12px;line-height:14px;color:#111;letter-spacing:0.102px;">PR145</span>
<span class="t" style="left:3.40px;top:23px;font-size:12px;line-height:14px;color:#111;letter-spacing:0.059px;">2450.0 tr/min</span>
<span class="t" style="left:3.40px;top:43px;font-size:12px;line-height:14px;color:#f00;letter-spacing:0.059px;">2450.0 tr/min</span>
<span class="t" style="left:3.40px;top:63px;font-size:12px;line-height:14px;color:#111;letter-spacing:-0.001px;">0.0 tr/min</span>
<span class="t" style="left:103.40px;top:3px;font-size:12px;line-height:14px;color:#111;letter-spacing:0.102px;">PR429</span>
<span class="t" style="left:103.40px;top:23px;font-size:12px;line-height:14px;color:#111;letter-spacing:-0.217px;">1.4 %</span>
<span class="t" style="left:103.40px;top:43px;font-size:12px;line-height:14px;color:#f00;letter-spacing:-0.217px;">1.4 %</span>
<span class="t" style="left:103.40px;top:63px;font-size:12px;line-height:14px;color:#111;letter-spacing:-0.217px;">0.0 %</span>
<span class="t" style="left:203.40px;top:3px;font-size:12px;line-height:14px;color:#111;letter-spacing:0.102px;">PR580</span>
<span class="t" style="left:203.40px;top:23px;font-size:12px;line-height:14px;color:#111;letter-spacing:0.030px;">290.0 mV</span>
<span class="t" style="left:203.40px;top:43px;font-size:12px;line-height:14px;color:#f00;letter-spacing:0.030px;">290.0 mV</span>
<span class="t" style="left:203.40px;top:63px;font-size:12px;line-height:14px;color:#111;letter-spacing:-0.102px;">0.0 mV</span>
<span class="t" style="left:303.40px;top:3px;font-size:12px;line-height:14px;color:#111;letter-spacing:0.102px;">PR582</span>
<span class="t" style="left:303.40px;top:23px;font-size:12px;line-height:14px;color:#111;letter-spacing:0.030px;">320.0 mV</span>
<span class="t" style="left:303.40px;top:43px;font-size:12px;line-height:14px;color:#f00;letter-spacing:0.030px;">320.0 mV</span>
<span class="t" style="left:303.40px;top:63px;font-size:12px;line-height:14px;color:#111;letter-spacing:-0.102px;">0.0 mV</span>
<span class="t" style="left:403.40px;top:3px;font-size:12px;line-height:14px;color:#111;letter-spacing:0.102px;">PR581</span>
<span class="t" style="left:403.40px;top:23px;font-size:12px;line-height:14px;color:#111;letter-spacing:0.030px;">290.0 mV</span>
<span class="t" style="left:403.40px;top:43px;font-size:12px;line-height:14px;color:#f00;letter-spacing:0.030px;">290.0 mV</span>
<span class="t" style="left:403.40px;top:63px;font-size:12px;line-height:14px;color:#111;letter-spacing:-0.102px;">0.0 mV</span>
<span class="t" style="left:503.40px;top:3px;font-size:12px;line-height:14px;color:#111;letter-spacing:0.102px;">PR583</span>
<span class="t" style="left:503.40px;top:23px;font-size:12px;line-height:14px;color:#111;letter-spacing:0.030px;">290.0 mV</span>
<span class="t" style="left:503.40px;top:43px;font-size:12px;line-height:14px;color:#f00;letter-spacing:0.030px;">290.0 mV</span>
<span class="t" style="left:503.40px;top:63px;font-size:12px;line-height:14px;color:#111;letter-spacing:-0.102px;">0.0 mV</span>
<span class="t" style="left:603.40px;top:3px;font-size:12px;line-height:14px;color:#111;letter-spacing:0.102px;">PR146</span>
<span class="t" style="left:603.40px;top:23px;font-size:12px;line-height:14px;color:#111;letter-spacing:-0.003px;">5.1 g/s</span>
<span class="t" style="left:603.40px;top:43px;font-size:12px;line-height:14px;color:#f00;letter-spacing:-0.003px;">5.1 g/s</span>
<span class="t" style="left:603.40px;top:63px;font-size:12px;line-height:14px;color:#111;letter-spacing:-0.003px;">0.0 g/s</span>
<div class="hsb"><svg class="abs" style="left:5px;top:3px" width="5" height="9" viewBox="0 0 5 9"><path d="M4.4 1 L0.6 4.5 L4.4 8 Z" fill="#9a9a9a"/></svg><svg class="abs" style="left:1077px;top:3px" width="5" height="9" viewBox="0 0 5 9"><path d="M0.6 1 L4.4 4.5 L0.6 8 Z" fill="#9a9a9a"/></svg></div>
</div>
<div id="btnbar"><div id="btnbg"></div><div class="abs" style="left:715px;top:0;width:463px;height:1px;background:#8c8c8c"></div>
<div class="btn" style="left:1px;width:153px"><span class="t" style="left:9.10px;top:5px;font-size:14px;line-height:16px;color:#fff;transform:scaleX(0.9404);transform-origin:0 0;">TABLE DES VALEURS</span></div>
<div class="btn" style="left:156px;width:198px"><span class="t" style="left:8.80px;top:5px;font-size:14px;line-height:16px;color:#8e8e8e;transform:scaleX(0.9043);transform-origin:0 0;">INFORMATIONS UTILISATEUR</span></div>
<div class="btn" style="left:356px;width:88px"><span class="t" style="left:25.00px;top:5px;font-size:14px;line-height:16px;color:#8e8e8e;transform:scaleX(0.9050);transform-origin:0 0;">ZOOM</span></div>
<div class="btn" style="left:446px;width:113px"><span class="t" style="left:8.80px;top:5px;font-size:14px;line-height:16px;color:#8e8e8e;transform:scaleX(0.8934);transform-origin:0 0;">TAILLE INITIALE</span></div>
<div class="btn" style="left:561px;width:154px"><span class="t" style="left:9.50px;top:5px;font-size:14px;line-height:16px;color:#8e8e8e;transform:scaleX(0.9094);transform-origin:0 0;">ORDRE D'AFFICHAGE</span></div>
<div class="btn" style="left:1178px;width:120px"><span class="t" style="left:9.40px;top:5px;font-size:14px;line-height:16px;color:#fff;transform:scaleX(0.9258);transform-origin:0 0;">SAUVEGARDER</span></div>
</div>
<div id="status1">
<span class="t" style="left:404.60px;top:3px;font-size:11px;line-height:12px;color:#111;letter-spacing:-0.028px;">Utiliser les touches Espace, flèche droite et flèche gauche pour déplacer le curseur.</span>
<div class="cam"><i class="lens"></i><i class="fl"></i></div>
</div>
<div id="status2">
<div class="abs" style="left:120px;top:1px;width:1px;height:14px;background:#8c8c8c"></div><div class="abs" style="left:121px;top:1px;width:1px;height:14px;background:#fff"></div>
<div class="abs" style="left:242px;top:1px;width:1px;height:14px;background:#8c8c8c"></div><div class="abs" style="left:243px;top:1px;width:1px;height:14px;background:#fff"></div>
<div class="abs" style="left:664px;top:1px;width:1px;height:14px;background:#8c8c8c"></div><div class="abs" style="left:665px;top:1px;width:1px;height:14px;background:#fff"></div>
<div class="abs" style="left:967px;top:1px;width:1px;height:14px;background:#8c8c8c"></div><div class="abs" style="left:968px;top:1px;width:1px;height:14px;background:#fff"></div>
<div class="abs" style="left:1089px;top:1px;width:1px;height:14px;background:#8c8c8c"></div><div class="abs" style="left:1090px;top:1px;width:1px;height:14px;background:#fff"></div>
<div class="abs" style="left:1211px;top:1px;width:1px;height:14px;background:#8c8c8c"></div><div class="abs" style="left:1212px;top:1px;width:1px;height:14px;background:#fff"></div>
<span class="t" style="left:1.40px;top:2px;font-size:10.5px;line-height:12px;color:#111;transform:scaleX(0.9544);transform-origin:0 0;">CLIP 202</span>
<span class="t" style="left:150.30px;top:2px;font-size:10.5px;line-height:12px;color:#111;transform:scaleX(0.9463);transform-origin:0 0;">DIAC_RECO3</span>
<span class="t" style="left:364.20px;top:2px;font-size:10.5px;line-height:12px;color:#111;letter-spacing:0.074px;">VELSATIS ph2-VF1BJ010B39157255</span>
<span class="t" style="left:1015.15px;top:2px;font-size:10.5px;line-height:12px;color:#111;letter-spacing:-0.099px;">10313</span>
<span class="t" style="left:1124.00px;top:2px;font-size:10.5px;line-height:12px;color:#111;letter-spacing:0.145px;">14/02/2026</span>
<span class="t" style="left:1252.60px;top:2px;font-size:10.5px;line-height:12px;color:#111;letter-spacing:0.014px;">10:13:11</span>
</div>
<div id="taskbar">
<svg class="abs" style="left:8.2px;top:0px" width="38" height="38" viewBox="0 0 38 38"><defs><radialGradient id="orb" cx="50%" cy="95%" r="80%"><stop offset="0" stop-color="#38e0ff"/><stop offset="0.28" stop-color="#1a8fd0"/><stop offset="0.6" stop-color="#1f5f98"/><stop offset="1" stop-color="#27507e"/></radialGradient><linearGradient id="orbh" x1="0" y1="0" x2="0" y2="1"><stop offset="0" stop-color="#dfeaf6" stop-opacity=".85"/><stop offset="1" stop-color="#9cc0e0" stop-opacity=".25"/></linearGradient><linearGradient id="wr" x1="0" y1="0" x2="0" y2="1"><stop offset="0" stop-color="#e8471c"/><stop offset="1" stop-color="#fba02a"/></linearGradient><linearGradient id="wg" x1="0" y1="0" x2="0" y2="1"><stop offset="0" stop-color="#5fa02c"/><stop offset="1" stop-color="#c4dc58"/></linearGradient><linearGradient id="wb" x1="0" y1="0" x2="0" y2="1"><stop offset="0" stop-color="#7cc4f0"/><stop offset="1" stop-color="#1c78c8"/></linearGradient><linearGradient id="wy" x1="0" y1="0" x2="0" y2="1"><stop offset="0" stop-color="#ffe070"/><stop offset="1" stop-color="#f8a818"/></linearGradient></defs><circle cx="19" cy="19" r="18" fill="url(#orb)" stroke="#1b4470" stroke-width="0.9"/><circle cx="19" cy="19" r="16.9" fill="none" stroke="#b8d4ee" stroke-opacity=".75" stroke-width="0.9"/><path d="M2.8 18.4 A16.2 16.2 0 0 1 35.2 18.4 Q19 23.4 2.8 18.4 Z" fill="url(#orbh)" opacity=".62"/><path d="M10 8.2 Q14.4 6 19 8.2 L17.4 17.2 Q13 15.2 8.2 17.6 Z" fill="url(#wr)"/><path d="M20.6 8.8 Q25 11 30.4 8.4 L28.6 17.6 Q23.6 20 18.8 17.8 Z" fill="url(#wg)"/><path d="M7.8 19.4 Q12.6 17 17 19 L15.2 28 Q11 25.8 6 28.4 Z" fill="url(#wb)"/><path d="M18.6 19.6 Q23.4 21.8 28.4 19.4 L26.6 28.4 Q21.4 30.8 16.8 28.6 Z" fill="url(#wy)"/></svg>
<svg class="abs" style="left:72px;top:1.5px" width="36" height="34" viewBox="0 0 36 34"><defs><radialGradient id="ieg" cx="45%" cy="85%" r="85%"><stop offset="0" stop-color="#38d4ff"/><stop offset="0.4" stop-color="#1c86dc"/><stop offset="0.8" stop-color="#0c4496"/><stop offset="1" stop-color="#082a60"/></radialGradient></defs><path d="M19 5.2 C11.6 5.2 6.4 10.6 6.4 17.6 C6.4 24.8 11.6 29.6 19 29.6 C24.4 29.6 28.8 26.6 30.6 21.8 L23.8 21.8 C22.8 23.4 21.2 24.2 19.2 24.2 C15.8 24.2 13.6 22.2 13.4 19.2 L31.4 19.2 C31.6 11.4 27 5.2 19 5.2 Z M13.6 14.8 C14.2 12.2 16.2 10.6 19 10.6 C21.8 10.6 23.8 12.2 24.2 14.8 Z" fill="url(#ieg)" stroke="#0a2f6a" stroke-width="0.7"/><path d="M8 12 Q12 7 18 6 Q14 9 12.4 13 Z" fill="#bfe4ff" opacity=".55"/><path d="M3.2 31 C0.2 25.8 9 12.4 22 5.4 C27.4 2.6 32 2.2 33 4.6 C33.6 6 33 8 32 9.6 C32.2 7.6 31.4 6.4 29.8 6.2 C24.4 5.8 12 14.6 7.2 23.4 C5.2 27 5.2 29.8 7 30.6 C8 31 9.4 30.8 10.6 30.4 C7.6 32.4 4.4 33 3.2 31 Z" fill="#f4b914" stroke="#d89a10" stroke-width="0.3"/><path d="M2.6 30.6 C1 27 4 21 8 16 C5.4 21 4.6 26 5.6 29.6 Z" fill="#f6e27a" opacity=".7"/></svg>
<svg class="abs" style="left:134px;top:4px" width="34" height="32" viewBox="134 733 34 32"><defs><linearGradient id="fg" x1="0" y1="0" x2="0" y2="1"><stop offset="0" stop-color="#fdf1b8"/><stop offset="1" stop-color="#efcf72"/></linearGradient><linearGradient id="fb" x1="0" y1="0" x2="0" y2="1"><stop offset="0" stop-color="#e4f6ff"/><stop offset="0.5" stop-color="#8fd0f4"/><stop offset="1" stop-color="#4aa4e0"/></linearGradient></defs><path d="M136.6 761 V737 Q136.6 735.6 138 735.6 H145 L146.6 737 H153 L154.4 738.6 H161 L162.4 740.2 H164.8 Q166.2 740.2 166.2 741.6 V761 Z" fill="#f6e4a0" stroke="#c9a94e" stroke-width="0.8"/><rect x="139.4" y="736.4" width="3.8" height="2.2" fill="#12b024"/><rect x="147.8" y="737.8" width="3.6" height="2.2" fill="#e23826"/><rect x="155.6" y="739.4" width="4" height="2.2" fill="#2690f4"/><path d="M136.6 744 Q136.6 742.6 138 742.6 H164.8 Q166.2 742.6 166.2 744 V760 Q166.2 761.4 164.8 761.4 H138 Q136.6 761.4 136.6 760 Z" fill="url(#fg)" stroke="#c9a94e" stroke-width="0.8"/><path d="M140.8 763.6 V749.6 Q140.8 747 143.4 747 H162.4 Q165 747 165 749.6 V763.6 H158.8 V755.2 H147 V763.6 Z" fill="url(#fb)" stroke="#2f8acc" stroke-width="0.9"/><path d="M142.4 748.4 L143.4 752.6 L147.6 753.6 L143.4 754.6 L142.4 758.8 L141.4 754.6 L137.2 753.6 L141.4 752.6 Z" fill="#fff" opacity=".95"/></svg>
<svg class="abs" style="left:198px;top:6px" width="30" height="28" viewBox="0 0 30 28"><path d="M22 3.4 L27.6 5 V24 L22 25.4 Z" fill="#9cc4e4" stroke="#6a9cc8" stroke-width="0.6"/><path d="M20 2.6 L25 4 V24.6 L20 26 Z" fill="#b4d4ee" stroke="#6a9cc8" stroke-width="0.6"/><rect x="1.4" y="2" width="20.6" height="24.4" fill="#a4cdf0" stroke="#5f98cc" stroke-width="0.8"/><circle cx="11.6" cy="14" r="9.2" fill="#f47a16" stroke="#c85a08" stroke-width="0.8"/><path d="M8.4 8.2 L18 14 L8.4 19.8 Z" fill="#fff"/></svg>
<div class="tbtn"><div class="clipicon"><div class="ct"><svg class="abs" style="left:0;top:0" width="32" height="16" viewBox="0 0 32 16"><path d="M8 9 Q13 5.2 19 6 Q24 6.6 27 8.6" fill="none" stroke="#9a9a9a" stroke-width="0.5"/></svg></div><span class="t" style="left:3.4px;top:9.4px;font-size:7px;line-height:8px;font-weight:bold;color:#000;transform:scaleX(1.62);transform-origin:0 0">CLip</span></div></div>
<div id="tray"></div>
<svg class="abs" style="left:1140px;top:0" width="130" height="39" viewBox="1140 729 130 39"><path d="M1149.2 751.4 L1153.4 746.4 L1157.6 751.4 Z" fill="#fff"/><path d="M1149.2 751.8 H1157.6" stroke="#5a6880" stroke-width="0.7"/><g stroke="#2f3948" stroke-width="2.6" stroke-linejoin="round" fill="none" opacity=".75"><rect x="1171.4" y="742.8" width="8" height="13.2" rx="1.6"/><path d="M1177 745 H1184 V748.4 Q1184 750.8 1181.6 750.8 H1179.4 Q1177 750.8 1177 748.4 Z M1180.5 751 V756.4"/></g><rect x="1171.4" y="742.8" width="8" height="13.2" rx="1.6" fill="none" stroke="#fff" stroke-width="1.3"/><rect x="1173.6" y="741.6" width="3.6" height="1.4" fill="#fff"/><path d="M1176.6 744.8 H1184.4 V748.4 Q1184.4 751.2 1181.8 751.2 H1179.2 Q1176.6 751.2 1176.6 748.4 Z" fill="#fff" stroke="#2f3948" stroke-width="0.5"/><rect x="1178" y="741.6" width="1.5" height="3.4" fill="#fff"/><rect x="1181.6" y="741.6" width="1.5" height="3.4" fill="#fff"/><rect x="1179.6" y="751" width="1.9" height="5.8" fill="#fff"/><path d="M1194.6 745.8 H1197.4 L1201.2 741.4 V756.8 L1197.4 752.4 H1194.6 Z" fill="#fff" stroke="#4a566a" stroke-width="0.7" stroke-linejoin="round"/><path d="M1203.2 746.4 Q1205.2 749.1 1203.2 751.8" fill="none" stroke="#fff" stroke-width="1.2" stroke-linecap="round"/><path d="M1206 743.6 Q1210 749.1 1206 754.6" fill="none" stroke="#e4e9f0" stroke-width="1.3" stroke-linecap="round"/><defs><linearGradient id="scr" x1="0" y1="0" x2="1" y2="1"><stop offset="0" stop-color="#93a1b4"/><stop offset="1" stop-color="#4d5b6f"/></linearGradient></defs><rect x="1223.4" y="743.8" width="10.4" height="10.6" fill="url(#scr)" stroke="#fff" stroke-width="1.1"/><path d="M1221.2 756 H1233" stroke="#fff" stroke-width="1.3"/><path d="M1219 741.6 V744.8 M1221.4 741.6 V744.8 M1223.6 741.6 V744.8" stroke="#fff" stroke-width="1"/><path d="M1218.6 744.8 H1224 V747 Q1224 748.6 1222.4 748.6 H1220.2 Q1218.6 748.6 1218.6 747 Z" fill="#fff"/><path d="M1221.3 748.4 V756.4" stroke="#fff" stroke-width="1.5"/><path d="M1225.6 749.2 L1233.8 756.6 M1233.8 749.2 L1225.6 756.6" stroke="#e60b0b" stroke-width="2.1"/><path d="M1243.4 741.6 V756.8" stroke="#fff" stroke-width="1.8"/><path d="M1242.3 741.4 V757" stroke="#3f4b5e" stroke-width="0.5"/><path d="M1244.4 742.2 Q1248 741.2 1250.6 743.2 Q1253.2 745 1257.4 744.4 L1257.4 750.6 Q1253 751.4 1250.4 749.6 Q1247.6 747.8 1244.4 749 Z" fill="#f3f6fa" stroke="#dfe5ee" stroke-width="0.4"/><circle cx="1253.1" cy="752.5" r="4.5" fill="#e3241c" stroke="#fdeeee" stroke-width="0.6"/><path d="M1251.2 750.6 L1255 754.4 M1255 750.6 L1251.2 754.4" stroke="#fff" stroke-width="1.5"/></svg>
<span class="t" style="left:1291.50px;top:5px;font-size:12px;line-height:14px;color:#fff;transform:scaleX(0.8992);transform-origin:0 0;">10:13</span>
<span class="t" style="left:1276.20px;top:22px;font-size:12px;line-height:14px;color:#fff;letter-spacing:-0.245px;">14/02/2026</span>
<div id="showdesk"></div>
</div>
</body></html>
